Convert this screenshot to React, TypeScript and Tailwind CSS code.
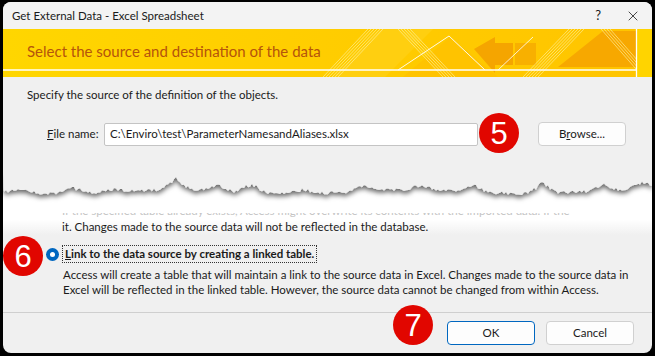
import { X } from 'lucide-react'

const FONT = { fontFamily: 'Lato, "Noto Sans", sans-serif' }

// deterministic jagged edge for the torn-paper cut
function tornPath(width: number) {
  let seed = 11
  const rnd = () => {
    seed = (seed * 9301 + 49297) % 233280
    return seed / 233280
  }
  const peaks: Record<number, number> = { 20: 4, 70: 7, 110: 3, 172: 11, 215: 5, 248: 9, 300: 4, 360: 6, 420: 5, 470: 7, 540: 12, 600: 6, 640: 8 }
  let d = `M0 0 L${width} 0 L${width} 20 `
  for (let x = width; x >= 0; x -= 2) {
    let y = 20 + Math.sin(x / 37) * 2 + rnd() * 3
    for (const k in peaks) {
      const dist = Math.abs(x - Number(k))
      if (dist < 16) y -= peaks[k] * (1 - dist / 16) * (0.7 + rnd() * 0.5)
    }
    d += `L${x} ${y.toFixed(1)} `
  }
  return d + 'Z'
}

function Badge({ n, className }: { n: number; className: string }) {
  return (
    <div
      className={`absolute w-[40px] h-[40px] rounded-full bg-[#e10600] text-white flex items-center justify-center text-[31px] leading-none ${className}`}
      style={{ fontFamily: '"Liberation Sans", Arial, sans-serif' }}
    >
      {n}
    </div>
  )
}

function Banner() {
  return (
    <div className="relative shrink-0 h-[48px] bg-[#ffd200] flex items-center pl-[24px] pb-[4px] overflow-hidden">
      <svg className="absolute inset-0" width="649" height="48" viewBox="0 0 649 48">
        <defs>
          <linearGradient id="bg" x1="0" x2="1">
            <stop offset="0" stopColor="#ffd600" />
            <stop offset="0.55" stopColor="#ffcc00" />
            <stop offset="1" stopColor="#ffc400" />
          </linearGradient>
        </defs>
        <rect width="649" height="48" fill="url(#bg)" />
        <polygon points="330,48 378,0 430,0 382,48" fill="#ffcf10" />
        <polygon points="400,48 447,8 495,48" fill="#ffc000" opacity="0.7" />
        <polygon points="471,20 492,8 492,14 510,14 510,36 492,36 492,44" fill="#f5a500" />
        <polygon points="512,14 533,14 533,36 512,36" fill="#f8b000" />
        <polygon points="555,38 600,2 633,2 633,38" fill="#f7a800" />
        <g stroke="#fff3a0" strokeWidth="0.8" opacity="0.8">
          {[0, 3, 6, 9, 12, 15].map((o) => (
            <line key={`a${o}`} x1={320 + o} y1="48" x2={365 + o} y2="0" />
          ))}
          {[0, 3, 6, 9, 12].map((o) => (
            <line key={`b${o}`} x1={395 + o} y1="0" x2={440 + o} y2="48" />
          ))}
          {[0, 3, 6, 9, 12, 15].map((o) => (
            <line key={`c${o}`} x1={520 + o} y1="48" x2={566 + o} y2="0" />
          ))}
          {[0, 3, 6, 9].map((o) => (
            <line key={`d${o}`} x1={598 + o} y1="0" x2={640 + o} y2="48" />
          ))}
        </g>
        <polyline points="395,41 446,7 482,41" fill="none" stroke="#fff" strokeWidth="1" opacity="0.9" />
        <line x1="495" y1="41" x2="530" y2="8" stroke="#fff" strokeWidth="1" opacity="0.8" />
        <line x1="0" y1="41" x2="649" y2="41" stroke="#fff" strokeWidth="1.3" />
        <rect x="634" width="15" height="48" fill="#ffd400" />
        <line x1="633.5" y1="0" x2="633.5" y2="48" stroke="#fff" strokeWidth="1.3" />
      </svg>
      <span className="relative text-[15px] text-[#b5540c]">Select the source and destination of the data</span>
    </div>
  )
}

function TornEdge() {
  return (
    <svg width="649" height="34" viewBox="0 0 649 34" className="block shrink-0">
      <defs>
        <filter id="sh" x="-5%" y="-50%" width="110%" height="200%">
          <feDropShadow dx="0" dy="3" stdDeviation="2.4" floodColor="#000" floodOpacity="0.6" />
        </filter>
      </defs>
      <rect width="649" height="34" fill="#fff" />
      <path d={tornPath(649)} fill="#f0f0f0" filter="url(#sh)" />
    </svg>
  )
}

export default function App() {
  return (
    <div className="w-[655px] h-[356px] bg-black pt-[2px] px-[3px] pb-[3px]" style={FONT}>
      <div className="relative h-full rounded-[8px] bg-[#f0f0f0] flex flex-col overflow-hidden text-[11.5px] text-[#1a1a1a] whitespace-nowrap">
        <div className="shrink-0 h-[27px] flex items-center justify-between pl-[9px] pr-[11px] bg-[#f3f3f3]">
          <span>Get External Data - Excel Spreadsheet</span>
          <div className="flex items-center gap-[24px]">
            <span className="text-[13px]">?</span>
            <X className="w-[16px] h-[16px]" strokeWidth={1.2} />
          </div>
        </div>
        <Banner />
        <div className="shrink-0 pl-[24px] pt-[10px] leading-[16px]">Specify the source of the definition of the objects.</div>
        <div className="shrink-0 flex items-center mt-[19px] pl-[44px]">
          <span className="w-[57px]">
            <span className="underline">F</span>ile name:
          </span>
          <div className="w-[374px] h-[23px] bg-white border border-[#c4c4c4] rounded-[2px] flex items-center px-[5px]">
            C:\Enviro\test\ParameterNamesandAliases.xlsx
          </div>
          <button className="ml-[60px] w-[88px] h-[24px] bg-[#fdfdfd] border border-[#d0d0d0] rounded-[4px]">
            B<span className="underline">r</span>owse...
          </button>
        </div>
        <div className="shrink-0 mt-[24px]">
          <TornEdge />
        </div>
        <div className="shrink-0 bg-gradient-to-b from-white via-white to-[#f0f0f0] pl-[59px] pt-[9px] leading-[16px]">
          <div className="h-[5px] overflow-hidden text-[#c4c4c4]">
            <div className="-mt-[10px]">
              If the specified table already exists, Access might overwrite its contents with the imported data. If the
            </div>
          </div>
          <div className="mt-[1px]">it. Changes made to the source data will not be reflected in the database.</div>
        </div>
        <div className="shrink-0 flex items-center mt-[10px] pl-[43px]">
          <div className="w-[13px] h-[13px] rounded-full bg-[#0067c0] flex items-center justify-center">
            <div className="w-[5px] h-[5px] rounded-full bg-white" />
          </div>
          <div className="ml-[3px] px-[2px] border border-dotted border-[#333] font-bold leading-[16px]">
            <span className="underline">L</span>ink to the data source by creating a linked table.
          </div>
        </div>
        <div className="shrink-0 pl-[60px] pt-[4px] leading-[15px]">
          <div>
            Access will create a table that will maintain a link to the source data in Excel. Changes made to the source data in
          </div>
          <div>Excel will be reflected in the linked table. However, the source data cannot be changed from within Access.</div>
        </div>
        <div className="mt-auto shrink-0 border-t border-[#cfcfcf] h-[41px] flex items-center justify-end pr-[18px] gap-[11px]">
          <button className="w-[88px] h-[24px] bg-[#fdfdfd] border border-[#0067c0] rounded-[4px]">OK</button>
          <button className="w-[88px] h-[24px] bg-[#fdfdfd] border border-[#d0d0d0] rounded-[4px]">Cancel</button>
        </div>
        <Badge n={5} className="left-[476px] top-[111px]" />
        <Badge n={6} className="left-[0px] top-[234px]" />
        <Badge n={7} className="left-[390px] top-[303px]" />
      </div>
    </div>
  )
}
